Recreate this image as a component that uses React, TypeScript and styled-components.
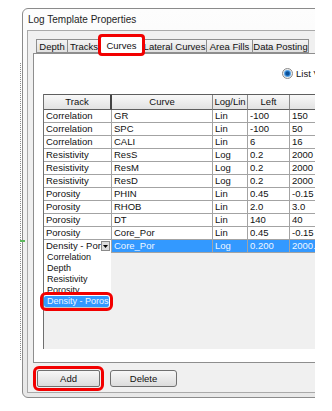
import React from "react";
import styled, { createGlobalStyle, css } from "styled-components";

// Global
const GlobalStyle = createGlobalStyle`
  html, body {
    margin: 0;
    padding: 0;
    background: #fff;
  }
  body {
    font-family: "Liberation Sans", Arial, sans-serif;
    color: #111;
  }
`;

const callout = css`
  outline: 3px solid #f20000;
  border-radius: 2px;
`;

// Styles
const Page = styled.div`
  display: flex;
  align-items: flex-start;
  width: 332px;
  height: 411px;
  overflow: hidden;
`;

const Guide = styled.div`
  position: relative;
  margin: 63px 0 0 20px;
  height: 297px;
  border-left: 1px dotted #8a8a8a;

  &::after {
    content: "";
    position: absolute;
    top: 177px;
    left: -1px;
    width: 5px;
    height: 2px;
    background: #5cb85c;
  }
`;

const Clip = styled.div`
  margin: 8px 0 0 1px;
  width: 293px;
  height: 391px;
  overflow: hidden;
`;

const Window = styled.div`
  box-sizing: border-box;
  width: 380px;
  height: 390px;
  border: 1px solid #8b8b8b;
  border-radius: 6px;
  background: linear-gradient(#fdfdfd, #e8e8e8);
  padding: 0 0 4px 4px;
  display: flex;
  flex-direction: column;
`;

const TitleBar = styled.div`
  height: 21px;
  display: flex;
  align-items: center;
  padding-left: 1px;
  font-size: 10px;
  color: #1e1e1e;
`;

const Client = styled.div`
  flex: 1;
  min-height: 0;
  border: 1px solid #a9a9a9;
  border-right: none;
  background: #f0f0f0;
  padding: 8px 0 0 5px;
  display: flex;
  flex-direction: column;
`;

const TabStrip = styled.div`
  display: flex;
  align-items: flex-end;
  height: 14px;
  padding-left: 4px;
`;

const Tab = styled.div<{ $active?: boolean; $w: number }>`
  box-sizing: border-box;
  position: relative;
  width: ${(p) => p.$w}px;
  height: ${(p) => (p.$active ? 18 : 14)}px;
  margin-left: -1px;
  border: 1px solid #8e8e8e;
  border-bottom: ${(p) => (p.$active ? "none" : "1px solid #8e8e8e")};
  background: ${(p) => (p.$active ? "#fff" : "linear-gradient(#f4f4f4, #e0e0e0)")};
  font-size: 9.5px;
  white-space: nowrap;
  display: flex;
  align-items: center;
  justify-content: center;
  z-index: ${(p) => (p.$active ? 2 : 1)};
  ${(p) =>
    p.$active &&
    css`
      ${callout};
      outline-offset: -1px;
      margin-bottom: -1px;
    `}
`;

const TabPage = styled.div`
  box-sizing: border-box;
  height: 310px;
  border: 1px solid #8e8e8e;
  background: #fff;
`;

const RadioRow = styled.div`
  display: flex;
  align-items: center;
  gap: 3px;
  height: 12px;
  margin-top: 13px;
  padding-left: 248px;
  font-size: 9.5px;
  white-space: nowrap;
`;

const Radio = styled.span`
  box-sizing: border-box;
  width: 11px;
  height: 11px;
  border-radius: 50%;
  border: 1px solid #8a8a8a;
  background: radial-gradient(
    circle,
    #0b4f96 0 1.5px,
    #2f86d8 2.5px,
    #8fc3ee 3.5px,
    #ececec 4px
  );
`;

const Grid = styled.div`
  margin: 15px 0 0 9px;
  height: 255px;
  border-left: 1px solid #6f6f6f;
  background: #f0f0f0;
`;

const Row = styled.div<{ $header?: boolean }>`
  display: grid;
  grid-template-columns: 68px 101px 35px 42px 81px;
  height: ${(p) => (p.$header ? 15 : 13)}px;
  ${(p) =>
    p.$header &&
    css`
      border-top: 1px solid #5e5e5e;
    `}
`;

const HeadCell = styled.div<{ $strong?: boolean }>`
  box-sizing: border-box;
  border-right: ${(p) => (p.$strong ? "2px solid #444" : "1px solid #8a8a8a")};
  border-bottom: 1px solid #5e5e5e;
  background: linear-gradient(#f8f8f8, #e2e2e2);
  font-size: 9.5px;
  line-height: 13px;
  text-align: center;
  white-space: nowrap;
  overflow: hidden;
`;

const Cell = styled.div<{ $sel?: boolean }>`
  position: relative;
  box-sizing: border-box;
  border-right: 1px solid #a3a3a3;
  border-bottom: 1px solid #a3a3a3;
  background: ${(p) => (p.$sel ? "#3399ff" : "#fff")};
  color: ${(p) => (p.$sel ? "#eef6ff" : "#111")};
  font-size: 9.5px;
  line-height: 12px;
  padding-left: 2px;
  white-space: nowrap;
  overflow: ${(p) => (p.$sel ? "hidden" : "visible")};
`;

const CellText = styled.span`
  display: block;
  overflow: hidden;
`;

const Combo = styled.div`
  display: flex;
  align-items: center;
  height: 12px;
`;

const ComboText = styled.span`
  flex: 1;
  overflow: hidden;
  white-space: nowrap;
`;

const ComboButton = styled.span`
  box-sizing: border-box;
  width: 9px;
  height: 10px;
  margin-right: 1px;
  border: 1px solid #8a8a8a;
  background: #dcdcdc;
  display: flex;
  align-items: center;
  justify-content: center;
`;

const Popup = styled.div`
  position: absolute;
  top: 12px;
  left: -1px;
  width: 68px;
  box-sizing: border-box;
  background: #fff;
  border-left: 1px solid #6f6f6f;
  border-bottom: 1px solid #c8c8c8;
  z-index: 3;
`;

const Option = styled.div<{ $hl?: boolean }>`
  height: 11px;
  line-height: 11px;
  padding-left: 3px;
  margin-right: 2px;
  font-size: 9px;
  white-space: nowrap;
  overflow: hidden;
  ${(p) =>
    p.$hl &&
    css`
      background: #3399ff;
      color: #eef6ff;
      ${callout};
      outline-offset: 1px;
    `}
`;

const ButtonBar = styled.div`
  display: flex;
  gap: 10px;
  padding: 7px 0 0 4px;
`;

const Button = styled.div<{ $w: number; $marked?: boolean }>`
  box-sizing: border-box;
  width: ${(p) => p.$w}px;
  height: 17px;
  border: 1px solid #707070;
  border-radius: 3px;
  background: linear-gradient(#f7f7f7, #dcdcdc);
  font-size: 9.5px;
  display: flex;
  align-items: center;
  justify-content: center;
  ${(p) =>
    p.$marked &&
    css`
      ${callout};
      outline-offset: 1px;
    `}
`;

// Data
const tabs = [
  { label: "Depth", w: 32 },
  { label: "Tracks", w: 34 },
  { label: "Curves", w: 43, active: true },
  { label: "Lateral Curves", w: 65 },
  { label: "Area Fills", w: 47 },
  { label: "Data Posting", w: 57 },
];

const rows = [
  ["Correlation", "GR", "Lin", "-100", "150"],
  ["Correlation", "SPC", "Lin", "-100", "50"],
  ["Correlation", "CALI", "Lin", "6", "16"],
  ["Resistivity", "ResS", "Log", "0.2", "2000"],
  ["Resistivity", "ResM", "Log", "0.2", "2000"],
  ["Resistivity", "ResD", "Log", "0.2", "2000"],
  ["Porosity", "PHIN", "Lin", "0.45", "-0.15"],
  ["Porosity", "RHOB", "Lin", "2.0", "3.0"],
  ["Porosity", "DT", "Lin", "140", "40"],
  ["Porosity", "Core_Por", "Lin", "0.45", "-0.15"],
];

const trackOptions = ["Correlation", "Depth", "Resistivity", "Porosity", "Density - Porosity"];

const App: React.FC = () => {
  return (
    <>
      <GlobalStyle />
      <Page>
        <Guide />
        <Clip>
          <Window>
            <TitleBar>Log Template Properties</TitleBar>
            <Client>
              <TabStrip>
                {tabs.map((t) => (
                  <Tab key={t.label} $w={t.w} $active={t.active}>
                    {t.label}
                  </Tab>
                ))}
              </TabStrip>
              <TabPage>
                <RadioRow>
                  <Radio />
                  <span>List View</span>
                </RadioRow>
                <Grid>
                  <Row $header>
                    <HeadCell $strong>Track</HeadCell>
                    <HeadCell>Curve</HeadCell>
                    <HeadCell>Log/Lin</HeadCell>
                    <HeadCell>Left</HeadCell>
                    <HeadCell>Right</HeadCell>
                  </Row>
                  {rows.map((r, i) => (
                    <Row key={i}>
                      {r.map((v, j) => (
                        <Cell key={j}>
                          <CellText>{v}</CellText>
                        </Cell>
                      ))}
                    </Row>
                  ))}
                  <Row>
                    <Cell>
                      <Combo>
                        <ComboText>Density - Porosity</ComboText>
                        <ComboButton>
                          <svg width="5" height="3" viewBox="0 0 5 3">
                            <path d="M0 0h5L2.5 3z" fill="#000" />
                          </svg>
                        </ComboButton>
                      </Combo>
                      <Popup>
                        {trackOptions.map((o, k) => (
                          <Option key={o} $hl={k === trackOptions.length - 1}>
                            {o}
                          </Option>
                        ))}
                      </Popup>
                    </Cell>
                    <Cell $sel>Core_Por</Cell>
                    <Cell $sel>Log</Cell>
                    <Cell $sel>0.200</Cell>
                    <Cell $sel>2000.000</Cell>
                  </Row>
                </Grid>
              </TabPage>
              <ButtonBar>
                <Button $w={63} $marked>
                  Add
                </Button>
                <Button $w={67}>Delete</Button>
              </ButtonBar>
            </Client>
          </Window>
        </Clip>
      </Page>
    </>
  );
};

export default App;
